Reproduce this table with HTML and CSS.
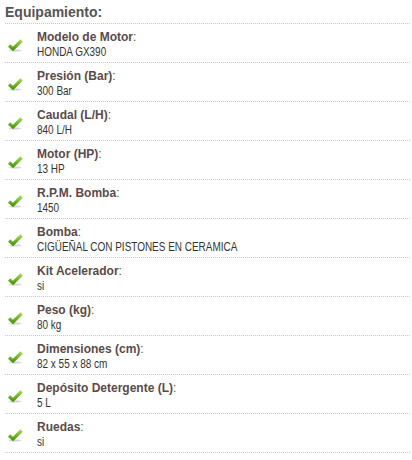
FILE: index.html
```html
<!DOCTYPE html>
<html>
<head>
<meta charset="utf-8">
<link rel="stylesheet" href="styles.css">
</head>
<body>
<svg width="0" height="0" class="defs"><defs><linearGradient id="g" x1="0" y1="0" x2="0" y2="1"><stop offset="0" stop-color="#9cd84a"/><stop offset="1" stop-color="#4f9a10"/></linearGradient></defs></svg>
<div class="box">
  <h3 class="title">Equipamiento:</h3>
  <ul class="list">
    <li class="row"><span class="chk"><svg width="15" height="13" viewBox="0 0 15 13"><ellipse cx="7" cy="11.5" rx="6.5" ry="1.2" fill="#d6d6d6"/><path d="M1 6.5 L5 10 L13.5 1.5" fill="none" stroke="url(#g)" stroke-width="3.2" stroke-linejoin="miter"/></svg></span><div class="txt"><b>Modelo de Motor</b>:<br><span class="val">HONDA GX390</span></div></li>
    <li class="row"><span class="chk"><svg width="15" height="13" viewBox="0 0 15 13"><ellipse cx="7" cy="11.5" rx="6.5" ry="1.2" fill="#d6d6d6"/><path d="M1 6.5 L5 10 L13.5 1.5" fill="none" stroke="url(#g)" stroke-width="3.2" stroke-linejoin="miter"/></svg></span><div class="txt"><b>Presión (Bar)</b>:<br><span class="val">300 Bar</span></div></li>
    <li class="row"><span class="chk"><svg width="15" height="13" viewBox="0 0 15 13"><ellipse cx="7" cy="11.5" rx="6.5" ry="1.2" fill="#d6d6d6"/><path d="M1 6.5 L5 10 L13.5 1.5" fill="none" stroke="url(#g)" stroke-width="3.2" stroke-linejoin="miter"/></svg></span><div class="txt"><b>Caudal (L/H)</b>:<br><span class="val">840 L/H</span></div></li>
    <li class="row"><span class="chk"><svg width="15" height="13" viewBox="0 0 15 13"><ellipse cx="7" cy="11.5" rx="6.5" ry="1.2" fill="#d6d6d6"/><path d="M1 6.5 L5 10 L13.5 1.5" fill="none" stroke="url(#g)" stroke-width="3.2" stroke-linejoin="miter"/></svg></span><div class="txt"><b>Motor (HP)</b>:<br><span class="val">13 HP</span></div></li>
    <li class="row"><span class="chk"><svg width="15" height="13" viewBox="0 0 15 13"><ellipse cx="7" cy="11.5" rx="6.5" ry="1.2" fill="#d6d6d6"/><path d="M1 6.5 L5 10 L13.5 1.5" fill="none" stroke="url(#g)" stroke-width="3.2" stroke-linejoin="miter"/></svg></span><div class="txt"><b>R.P.M. Bomba</b>:<br><span class="val">1450</span></div></li>
    <li class="row"><span class="chk"><svg width="15" height="13" viewBox="0 0 15 13"><ellipse cx="7" cy="11.5" rx="6.5" ry="1.2" fill="#d6d6d6"/><path d="M1 6.5 L5 10 L13.5 1.5" fill="none" stroke="url(#g)" stroke-width="3.2" stroke-linejoin="miter"/></svg></span><div class="txt"><b>Bomba</b>:<br><span class="val">CIGÜEÑAL CON PISTONES EN CERAMICA</span></div></li>
    <li class="row"><span class="chk"><svg width="15" height="13" viewBox="0 0 15 13"><ellipse cx="7" cy="11.5" rx="6.5" ry="1.2" fill="#d6d6d6"/><path d="M1 6.5 L5 10 L13.5 1.5" fill="none" stroke="url(#g)" stroke-width="3.2" stroke-linejoin="miter"/></svg></span><div class="txt"><b>Kit Acelerador</b>:<br><span class="val">si</span></div></li>
    <li class="row"><span class="chk"><svg width="15" height="13" viewBox="0 0 15 13"><ellipse cx="7" cy="11.5" rx="6.5" ry="1.2" fill="#d6d6d6"/><path d="M1 6.5 L5 10 L13.5 1.5" fill="none" stroke="url(#g)" stroke-width="3.2" stroke-linejoin="miter"/></svg></span><div class="txt"><b>Peso (kg)</b>:<br><span class="val">80 kg</span></div></li>
    <li class="row"><span class="chk"><svg width="15" height="13" viewBox="0 0 15 13"><ellipse cx="7" cy="11.5" rx="6.5" ry="1.2" fill="#d6d6d6"/><path d="M1 6.5 L5 10 L13.5 1.5" fill="none" stroke="url(#g)" stroke-width="3.2" stroke-linejoin="miter"/></svg></span><div class="txt"><b>Dimensiones (cm)</b>:<br><span class="val">82 x 55 x 88 cm</span></div></li>
    <li class="row"><span class="chk"><svg width="15" height="13" viewBox="0 0 15 13"><ellipse cx="7" cy="11.5" rx="6.5" ry="1.2" fill="#d6d6d6"/><path d="M1 6.5 L5 10 L13.5 1.5" fill="none" stroke="url(#g)" stroke-width="3.2" stroke-linejoin="miter"/></svg></span><div class="txt"><b>Depósito Detergente (L)</b>:<br><span class="val">5 L</span></div></li>
    <li class="row"><span class="chk"><svg width="15" height="13" viewBox="0 0 15 13"><ellipse cx="7" cy="11.5" rx="6.5" ry="1.2" fill="#d6d6d6"/><path d="M1 6.5 L5 10 L13.5 1.5" fill="none" stroke="url(#g)" stroke-width="3.2" stroke-linejoin="miter"/></svg></span><div class="txt"><b>Ruedas</b>:<br><span class="val">si</span></div></li>
  </ul>
</div>
</body>
</html>
```
FILE: styles.css
```css
html, body { margin: 0; padding: 0; background: #fff; }
body { font-family: "Liberation Sans", Arial, sans-serif; color: #444; }
.defs { position: absolute; width: 0; height: 0; }
.box { padding: 0 2px 0 5px; }
.title {
  margin: 0;
  font-size: 14px;
  font-weight: bold;
  color: #555;
  line-height: 16px;
  padding-top: 4px;
  height: 19px;
  border-bottom: 1px dotted #c8c8c8;
}
.list { list-style: none; margin: 0; padding: 0; }
.row {
  display: flex;
  align-items: center;
  height: 38px;
  border-bottom: 1px dotted #c8c8c8;
}
.chk { width: 32px; padding-left: 3px; display: flex; align-items: center; padding-top: 4px; box-sizing: border-box; }
.txt { font-size: 12px; line-height: 15px; color: #555; padding-top: 3px; }
.txt b { color: #5a4a4a; }
.val {
  display: inline-block;
  font-size: 12px;
  color: #333;
  white-space: nowrap;
  transform: scaleX(0.83);
  transform-origin: left center;
}
```
